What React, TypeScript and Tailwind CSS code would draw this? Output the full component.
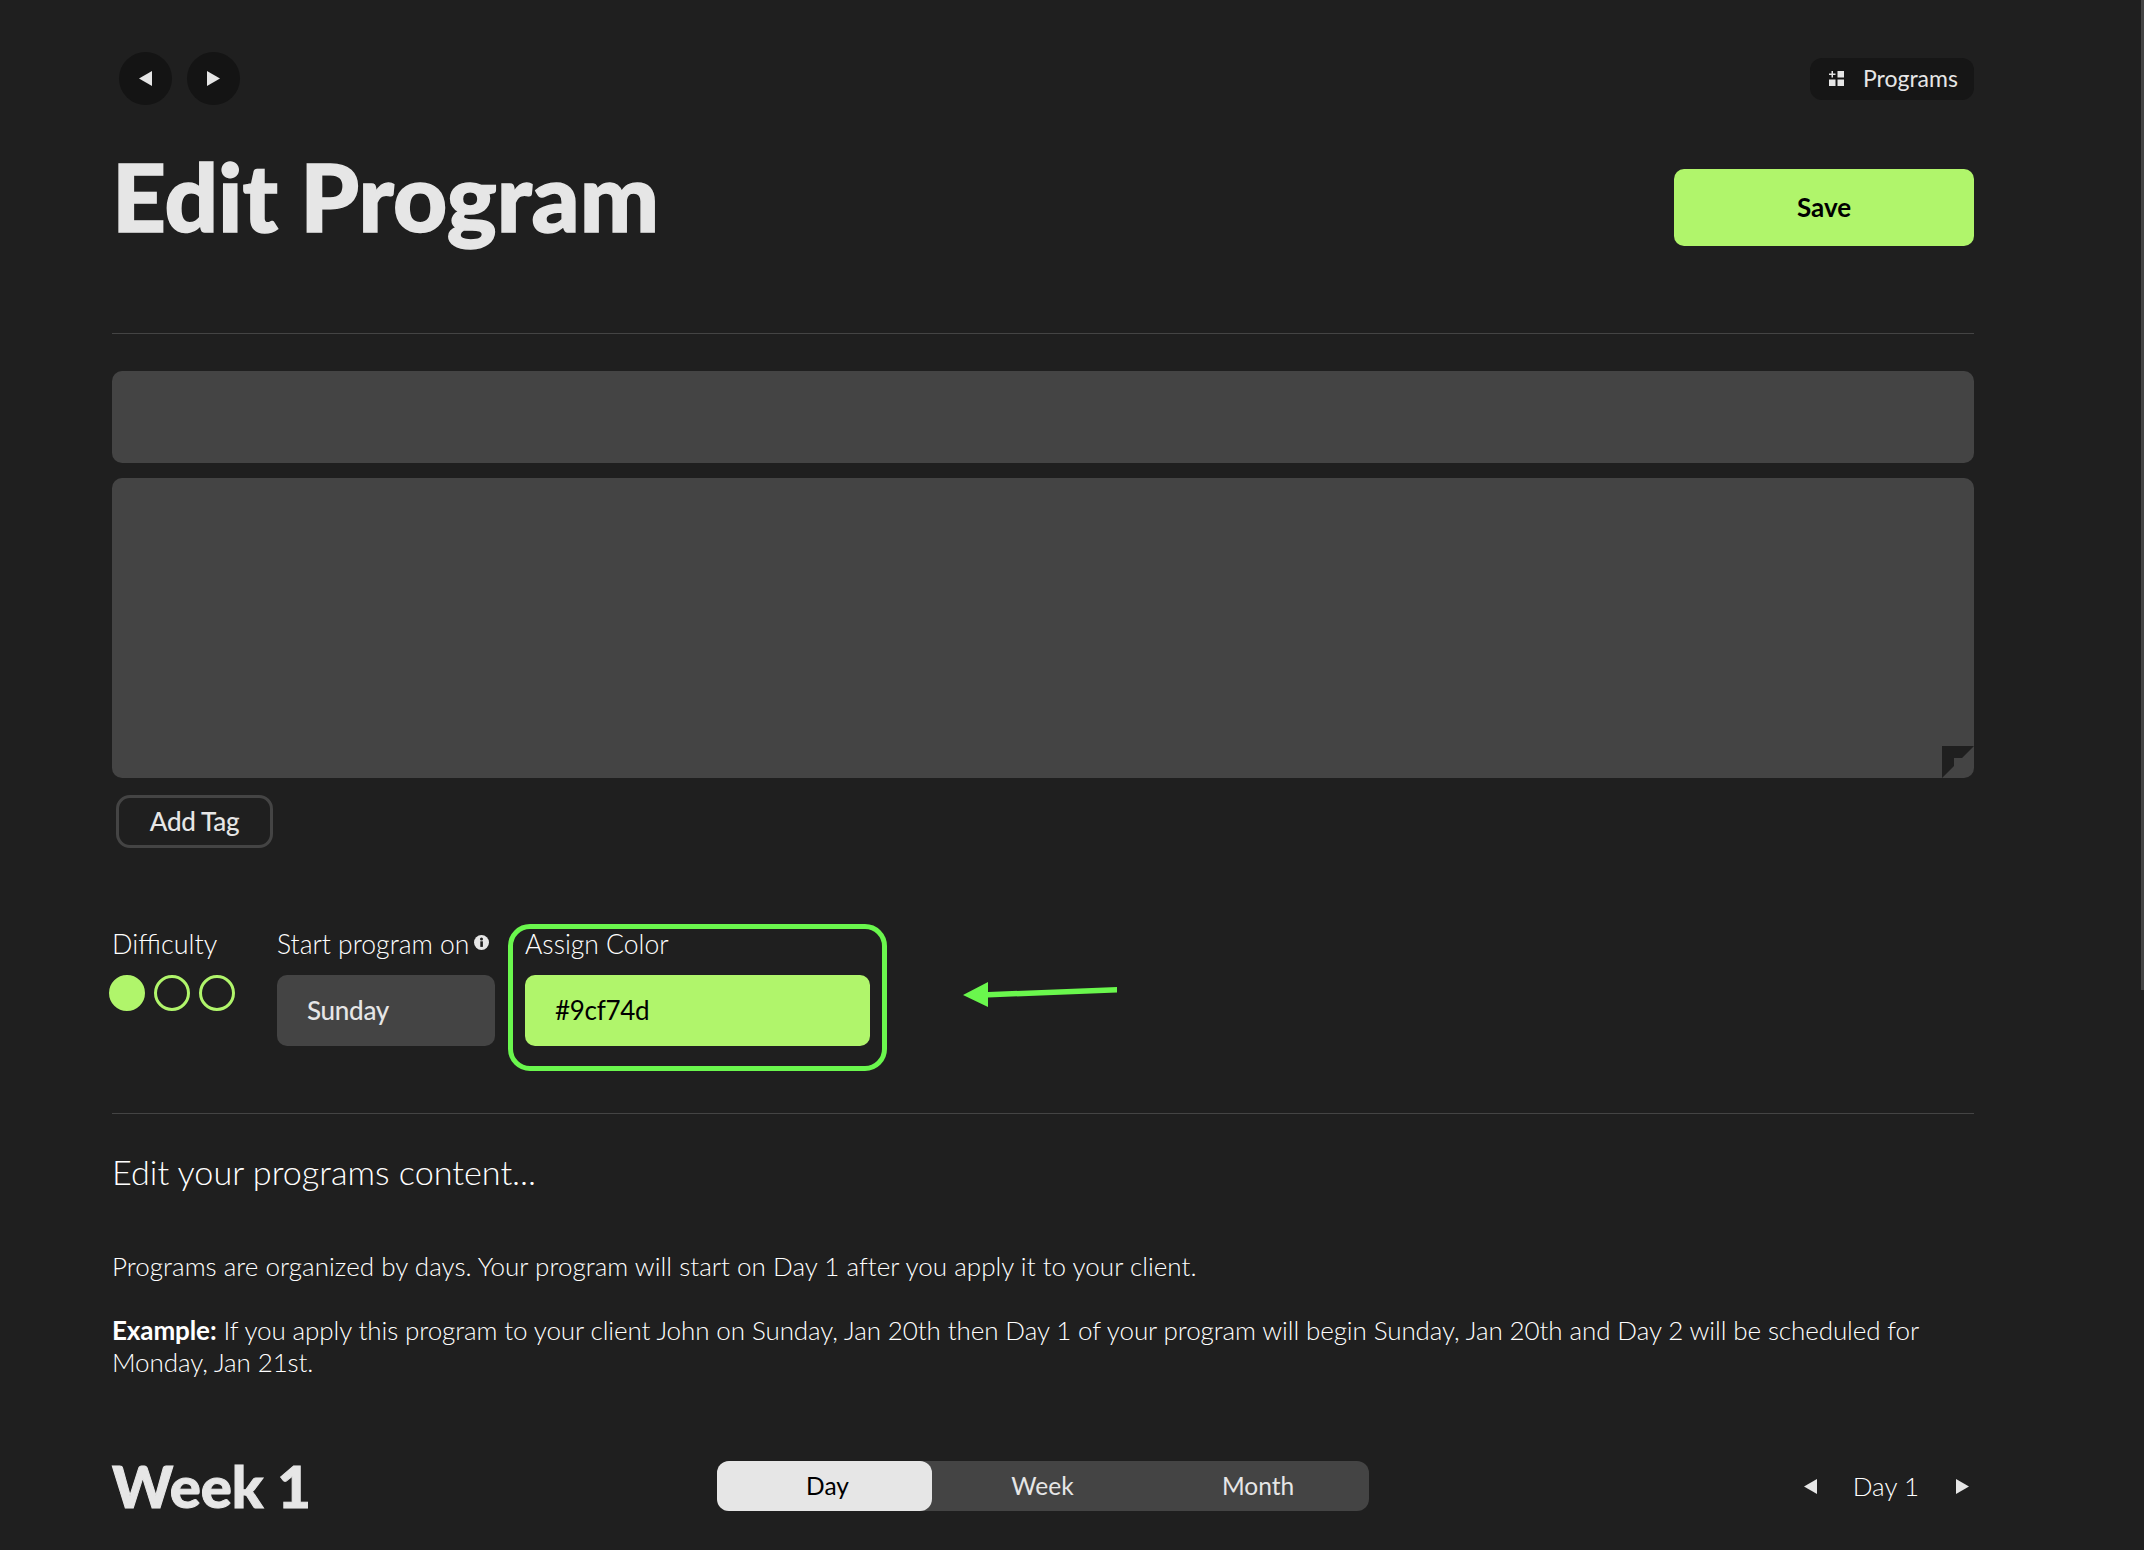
const Tri = ({ dir, className }: { dir: 'left' | 'right'; className?: string }) => (
  <svg viewBox="0 0 13 15" className={className} fill="currentColor">
    {dir === 'left' ? <polygon points="13,0 13,15 0,7.5" /> : <polygon points="0,0 0,15 13,7.5" />}
  </svg>
);

const ProgramsIcon = () => (
  <svg viewBox="0 0 15 15" className="w-[15px] h-[15px] text-[#e6e6e6]" fill="currentColor">
    <rect x="8.5" y="0" width="6.5" height="6.5" />
    <rect x="0" y="8.5" width="6.5" height="6.5" />
    <rect x="8.5" y="8.5" width="6.5" height="6.5" />
    <polygon points="2.5,0 4,0 4,2.5 6.5,2.5 6.5,4 4,4 4,6.5 2.5,6.5 2.5,4 0,4 0,2.5 2.5,2.5" />
  </svg>
);

const Dot = ({ filled }: { filled?: boolean }) => (
  <div
    className={`w-9 h-9 rounded-full border-[3px] border-[#b0f56b] ${filled ? 'bg-[#b0f56b]' : ''}`}
  />
);

export default function App() {
  return (
    <div className="relative w-[2144px] h-[1550px] overflow-hidden bg-[#1f1f1f] text-[#e6e6e6] font-['Lato',sans-serif]">
      <div className="absolute right-0 top-0 w-[3px] h-[990px] bg-[#444444]" />

      <div className="w-[1862px] ml-[112px]">
        {/* top nav */}
        <div className="flex items-center justify-between h-[53px] mt-[52px] pl-[7px]">
          <div className="flex gap-[15px]">
            <button className="w-[53px] h-[53px] rounded-full bg-[#141414] flex items-center justify-center">
              <Tri dir="left" className="w-[13px] h-[15px] text-[#e6e6e6]" />
            </button>
            <button className="w-[53px] h-[53px] rounded-full bg-[#141414] flex items-center justify-center">
              <Tri dir="right" className="w-[13px] h-[15px] text-[#e6e6e6]" />
            </button>
          </div>
          <button className="flex items-center gap-[19px] h-[42px] w-[164px] pl-[19px] rounded-xl bg-[#161616] text-[23px]">
            <ProgramsIcon />
            Programs
          </button>
        </div>

        {/* title row */}
        <div className="flex items-start justify-between h-[229px] border-b border-[#444444]">
          <h1 className="text-[94px] leading-[110px] font-black mt-[36px] [-webkit-text-stroke:1.5px_#e6e6e6]">Edit Program</h1>
          <button className="w-[300px] h-[77px] mt-[64px] rounded-[10px] bg-[#b0f56b] text-black text-[26px] font-bold">
            Save
          </button>
        </div>

        {/* name + description */}
        <div className="h-[92px] mt-[37px] rounded-[10px] bg-[#444444]" />
        <div className="relative h-[300px] mt-[15px] rounded-[10px] bg-[#444444]">
          <svg viewBox="0 0 32 32" className="absolute right-0 bottom-0 w-8 h-8 text-[#1f1f1f]" fill="currentColor">
            <polygon points="0,0 32,0 20,12 12,12 12,20 0,32" />
          </svg>
        </div>

        <button className="block w-[157px] h-[53px] mt-[17px] ml-1 rounded-[14px] border-[3px] border-[#444444] text-[26px] font-medium tracking-[-0.3px]">
          Add Tag
        </button>

        {/* settings */}
        <div className="flex mt-[76px] h-[147px]">
          <div className="w-[165px] pt-[3px]">
            <div className="text-[27px] font-light leading-[34px] text-white">Difficulty</div>
            <div className="flex gap-[9px] mt-[14px] ml-[-3px]">
              <Dot filled />
              <Dot />
              <Dot />
            </div>
          </div>
          <div className="w-[231px] pt-[3px]">
            <div className="flex items-start text-[26.5px] font-light leading-[34px] whitespace-nowrap text-white">
              Start program on
              <svg viewBox="0 0 15 15" className="w-[15px] h-[15px] ml-[5px] mt-2">
                <circle cx="7.5" cy="7.5" r="7.5" fill="#e6e6e6" />
                <rect x="6.3" y="6.3" width="2.6" height="5.6" fill="#1f1f1f" />
                <circle cx="7.5" cy="3.9" r="1.5" fill="#1f1f1f" />
              </svg>
            </div>
            <div className="w-[218px] h-[71px] mt-[14px] pl-[30px] flex items-center rounded-[10px] bg-[#444444] text-[26px] font-medium tracking-[-0.3px]">
              Sunday
            </div>
          </div>
          <div className="w-[379px] h-[147px] border-[5px] border-[#6af74d] rounded-[22px] pl-3">
            <div className="text-[26.5px] font-light leading-[34px] mt-[-2px] text-white">Assign Color</div>
            <div className="w-[345px] h-[71px] mt-[14px] pl-[30px] flex items-center rounded-[10px] bg-[#b0f56b] text-black text-[26px] tracking-[-0.3px]">
              #9cf74d
            </div>
          </div>
          <svg viewBox="0 0 160 30" className="w-[160px] h-[30px] ml-[76px] mt-14 text-[#6af74d]" fill="currentColor">
            <polygon points="0,15 25,2 25,12 154,7 154,12.5 25,17.5 25,27" />
          </svg>
        </div>

        <div className="h-px mt-[42px] bg-[#444444]" />

        {/* content intro */}
        <h2 className="mt-[37px] text-[34.2px] leading-[42px] font-light text-white">Edit your programs content...</h2>
        <p className="mt-[57px] text-[26px] leading-8 font-light text-white tracking-[0.03px]">
          Programs are organized by days. Your program will start on Day 1 after you apply it to your client.
        </p>
        <p className="mt-8 text-[26px] leading-8 font-light text-white tracking-[-0.1px]">
          <strong className="font-bold">Example:</strong> If you apply this program to your client John on Sunday, Jan 20th then Day 1 of your program will begin Sunday, Jan 20th and Day 2 will be scheduled for Monday, Jan 21st.
        </p>

        {/* week header */}
        <div className="flex items-center mt-[78px]">
          <h2 className="w-[605px] text-[58px] leading-[60px] font-black [-webkit-text-stroke:1px_#e6e6e6]">Week 1</h2>
          <div className="flex h-[50px] w-[652px] rounded-xl bg-[#444444] text-[24.5px] pt-px">
            <div className="w-[215px] flex items-center justify-center pl-[6px] rounded-xl bg-[#e6e6e6] text-black -mt-px">Day</div>
            <div className="w-[221px] flex items-center justify-center">Week</div>
            <div className="flex-1 flex items-center justify-center pr-[6px]">Month</div>
          </div>
          <div className="flex items-center flex-1 justify-end pr-[5px]">
            <Tri dir="left" className="w-[13px] h-[15px]" />
            <span className="ml-[36px] mr-[37px] text-[26px] font-light text-white">Day 1</span>
            <Tri dir="right" className="w-[13px] h-[15px]" />
          </div>
        </div>
      </div>
    </div>
  );
}
